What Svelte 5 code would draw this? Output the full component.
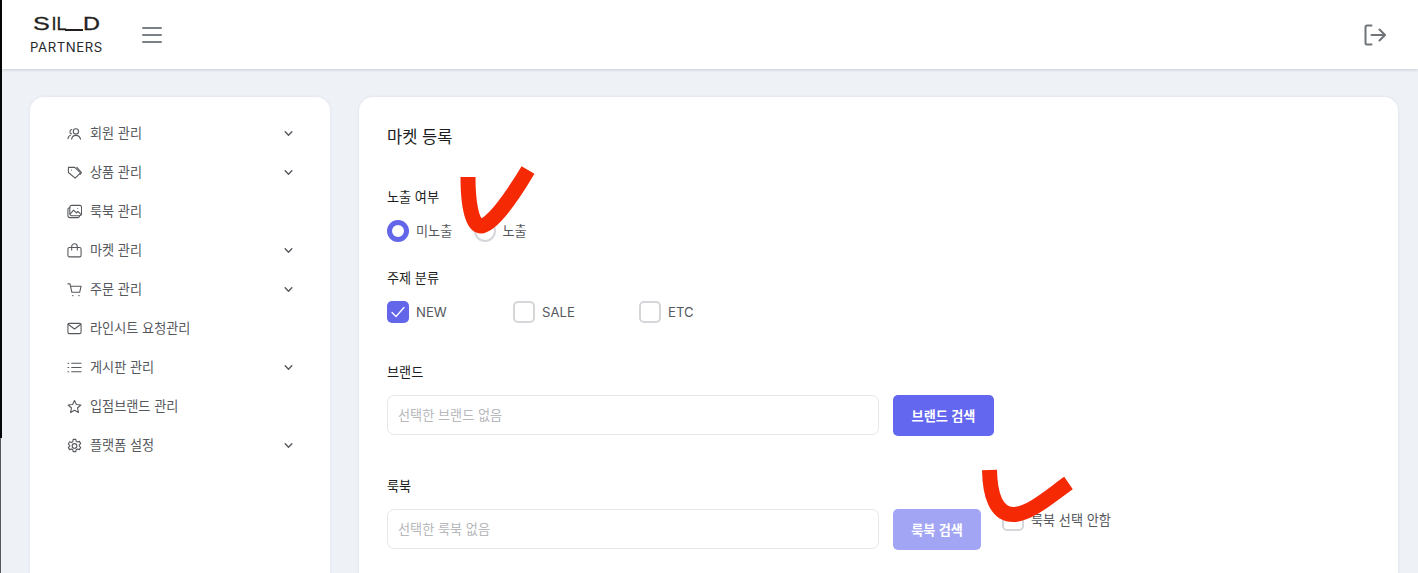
<script>
  const nav = [
    { label: '회원 관리', more: true, icon: ['M9.500 3a2.800 2.800 0 1 1 0 5.600a2.800 2.800 0 0 1 0-5.600z', 'M5 14c.4-2.600 2.200-4 4.500-4s4.100 1.400 5 4', 'M5 3.800a2.400 2.400 0 0 0-.3 4.600', 'M1 13.500c.2-1.800 1-3 2.600-3.600'] },
    { label: '상품 관리', more: true, icon: ['M1.500 2.500h6.700l6.300 5.800-5.800 5.700-7.200-6z', 'M4.800 5.400h.01', 'M10.500 2.500l5 5.500-1.500 2'] },
    { label: '룩북 관리', icon: ['M5 1.500h8.500a2 2 0 0 1 2 2v7a2 2 0 0 1-2 2H5a2 2 0 0 1-2-2v-7a2 2 0 0 1 2-2z', 'M3 4a1.800 1.800 0 0 0-2 1.800v6.500a2.200 2.200 0 0 0 2.200 2.200h8.300a1.800 1.800 0 0 0 1.800-2', 'M3.500 10.500l3.500-4 3 3 1.500-1.500 3.500 3', 'M11.500 4.500h.01'] },
    { label: '마켓 관리', more: true, icon: ['M2.500 4.800h11a1.500 1.500 0 0 1 1.500 1.500v7a1.500 1.500 0 0 1-1.500 1.500h-11A1.500 1.500 0 0 1 1 13.300v-7a1.500 1.500 0 0 1 1.500-1.500z', 'M5 7.500V3.800a3 3 0 0 1 6 0v3.700'] },
    { label: '주문 관리', more: true, icon: ['M1 2h2.200l2 9h8.300l1.500-6.500H4', 'M6 14.500h.4', 'M12.600 14.500h.4'] },
    { label: '라인시트 요청관리', icon: ['M2.500 2.500h11a1.500 1.500 0 0 1 1.500 1.500v8a1.500 1.500 0 0 1-1.500 1.500h-11A1.500 1.500 0 0 1 1 12V4a1.500 1.500 0 0 1 1.500-1.500z', 'M1.200 3.500l6.800 5l6.800-5'] },
    { label: '게시판 관리', more: true, icon: ['M5 3.500h10', 'M5 8h10', 'M5 12.500h10', 'M1 3.500h.8', 'M1 8h.8', 'M1 12.500h.8'] },
    { label: '입점브랜드 관리', icon: ['M8 1.500l2 4.400 4.800.5-3.600 3.200 1 4.800L8 12l-4.200 2.400 1-4.800L1.200 6.400 6 5.900z'] },
    { label: '플랫폼 설정', more: true, icon: ['M6.600 1.500h2.800l.4 2 1.500.8 1.900-.7 1.400 2.400-1.500 1.300v1.400l1.500 1.300-1.400 2.400-1.900-.7-1.500.8-.4 2H6.600l-.4-2-1.500-.8-1.900.7-1.400-2.400 1.500-1.300V7.800L1.400 6.500l1.400-2.400 1.900.7 1.500-.8z', 'M8 6a2.500 2.500 0 1 1 0 5a2.500 2.500 0 0 1 0-5z'] }
  ];
  const topics = [
    { label: 'NEW', on: true },
    { label: 'SALE', on: false },
    { label: 'ETC', on: false }
  ];
</script>

<div class="page">
  <header class="top">
    <div class="brand">
      <div class="logo"><span class="ls">S</span><span class="li">I</span><span class="ll">L</span><i></i><span class="ld">D</span></div>
      <div class="partners">PARTNERS</div>
    </div>
    <button class="burger" aria-label="메뉴"><span></span><span></span><span></span></button>
    <svg class="logout" viewBox="0 0 22 22" fill="none" stroke="#6f7479" stroke-width="2" stroke-linecap="round" stroke-linejoin="round">
      <path d="M7.500 1.500H3a1.500 1.500 0 0 0-1.500 1.500v16A1.500 1.500 0 0 0 3 20.500h4.500" />
      <path d="M7.500 11h13" />
      <path d="M15.500 5.500L21 11l-5.500 5.500" />
    </svg>
  </header>

  <div class="body">
    <aside class="side">
      <ul>
        {#each nav as item}
          <li>
            <svg class="ico" viewBox="0 0 16 16" fill="none" stroke="#55585d" stroke-width="1.150" stroke-linecap="round" stroke-linejoin="round">
              {#each item.icon as d}<path {d} />{/each}
            </svg>
            <span class="txt">{item.label}</span>
            {#if item.more}
              <svg class="chev" viewBox="0 0 10 10" fill="none" stroke="#55595f" stroke-width="1.300" stroke-linecap="round" stroke-linejoin="round"><path d="M2 3.500l3 3l3-3" /></svg>
            {/if}
          </li>
        {/each}
      </ul>
    </aside>

    <main class="card">
      <h1>마켓 등록</h1>

      <div class="lbl first">노출 여부</div>
      <div class="opts">
        <label class="opt r1"><span class="radio on"></span>미노출</label>
        <label class="opt"><span class="radio"></span>노출</label>
      </div>

      <div class="lbl second">주제 분류</div>
      <div class="opts topics">
        {#each topics as t}
          <label class="opt topic">
            <span class="box" class:on={t.on}>
              {#if t.on}
                <svg viewBox="0 0 22 22" fill="none" stroke="#fff" stroke-width="1.300" stroke-linecap="round" stroke-linejoin="round"><path d="M5 11.500l4 4l8-9" /></svg>
              {/if}
            </span>{t.label}
          </label>
        {/each}
      </div>

      <div class="lbl third">브랜드</div>
      <div class="field">
        <div class="input">선택한 브랜드 없음</div>
        <button class="btn wide">브랜드 검색</button>
      </div>

      <div class="lbl fourth">룩북</div>
      <div class="field">
        <div class="input">선택한 룩북 없음</div>
        <button class="btn dim">룩북 검색</button>
        <label class="opt none"><span class="box"></span>룩북 선택 안함</label>
      </div>
    </main>
  </div>

  <div class="strip"></div>
  <svg class="marks" viewBox="0 0 1418 573" fill="none" stroke="#f52a05" stroke-width="15">
    <path d="M468 177C468 195 470 226 481 226C492 226 515 192 528 170" />
    <path d="M989.500 470C990 495 996 515 1014 514.500C1030 514 1050 496 1068.500 483" />
  </svg>
</div>

<style>
  :global(body) { margin: 0; background: #eef1f6; }
  .page {
    position: relative;
    height: 573px;
    overflow: hidden;
    padding-left: 2px;
    box-sizing: border-box;
    background: #eef1f6;
    color: #26282b;
    font-family: Inter, "Noto Sans CJK KR", sans-serif;
    font-size: 13.150px;
  }
  .top {
    height: 69px;
    background: #fff;
    display: flex;
    align-items: center;
    padding: 0 32px 0 28px;
    box-shadow: 0 1px 3px rgba(60, 70, 90, .2);
    position: relative;
  }
  .brand { width: 112px; align-self: flex-start; }
  .logo {
    display: flex;
    align-items: flex-end;
    height: 15px;
    margin: 17px 0 0 3px;
    font-family: "Liberation Sans", sans-serif;
    font-size: 18px;
    line-height: 15px;
    color: #231f20;
    -webkit-text-stroke: .3px #231f20;
  }
  .logo span { display: block; flex: none; }
  .ls { width: 18.500px; transform: scaleX(1.400); transform-origin: left; }
  .li { width: 5px; }
  .ll { width: 8px; }
  .logo i { flex: none; width: 18.500px; height: 1.700px; background: #231f20; margin-bottom: 1px; }
  .ld { width: 17px; transform: scaleX(1.300); transform-origin: left; }
  .partners { margin-top: 7px; font-size: 13.200px; letter-spacing: .55px; line-height: 16px; color: #26282b; }
  .burger {
    width: 20px; height: 16px; padding: 0; border: 0; background: none;
    display: flex; flex-direction: column; justify-content: space-between;
  }
  .burger span { height: 2px; background: #7b8087; border-radius: 1px; }
  .logout { width: 22px; height: 22px; margin-left: auto; }

  .body { display: flex; gap: 29px; padding: 28px 20px 0 28px; align-items: flex-start; }
  .side {
    width: 300px; height: 560px; flex: none; background: #fff; border-radius: 14px;
    box-shadow: 0 0 3px rgba(60, 70, 90, .1); padding-top: 17px; box-sizing: border-box;
  }
  ul { list-style: none; margin: 0; padding: 0 36px 0 37px; }
  li { height: 39px; display: flex; align-items: center; color: #55585d; }
  .ico { width: 15px; height: 15px; margin-right: 8px; flex: none; }
  .txt { line-height: 39px; }
  .chev { width: 11px; height: 11px; margin-left: auto; }

  .card {
    flex: 1; height: 560px; background: #fff; border-radius: 14px;
    box-shadow: 0 0 3px rgba(60, 70, 90, .1); padding: 28px 28px 0; box-sizing: border-box;
  }
  h1 { margin: 0; font-size: 16.500px; font-weight: 400; line-height: 24px; color: #1c1e21; }
  .lbl { line-height: 20px; color: #1c1e21; font-weight: 400; }
  .first { margin-top: 38px; }
  .second { margin-top: 26px; }
  .third { margin-top: 39px; }
  .fourth { margin-top: 40px; }
  .opts { display: flex; margin-top: 13px; }
  .opt { display: flex; align-items: center; gap: 7px; color: #55585d; line-height: 22px; }
  .r1 { width: 86.500px; }
  .topics { margin-top: 13px; }
  .topic { width: 126px; }
  .radio { width: 22px; height: 22px; box-sizing: border-box; border-radius: 50%; border: 2px solid #d4d6d9; background: #fff; }
  .radio.on { border: 5.500px solid #6366e8; }
  .box { width: 22px; height: 22px; box-sizing: border-box; border-radius: 5px; border: 2px solid #d4d6d9; background: #fff; display: block; flex: none; }
  .box.on { background: #6366e8; border: 0; }
  .box svg { display: block; width: 22px; height: 22px; }
  .field { display: flex; align-items: flex-start; margin-top: 13px; height: 41px; }
  .input {
    width: 492px; height: 40px; box-sizing: border-box; border: 1px solid #e5e7eb; border-radius: 7px;
    padding-left: 10px; line-height: 38px; color: #b6b8bb; background: #fff; flex: none;
  }
  .btn {
    height: 41px; margin-left: 14px; border: 0; border-radius: 5px; background: #6366ee; color: #fff;
    font: 600 13.150px Inter, "Noto Sans CJK KR", sans-serif; padding: 0;
  }
  .wide { width: 101px; }
  .dim { width: 88px; background: #a2a5f4; }
  .none { margin: 0 0 0 21px; height: 22px; }

  .strip { position: absolute; left: 0; top: 0; width: 2px; height: 438px; background: #050608; }
  .strip::after { content: ""; position: absolute; left: 0; top: 438px; width: 1px; height: 135px; background: #55585d; }
  .marks { position: absolute; inset: 0; width: 1418px; height: 573px; pointer-events: none; }
</style>
